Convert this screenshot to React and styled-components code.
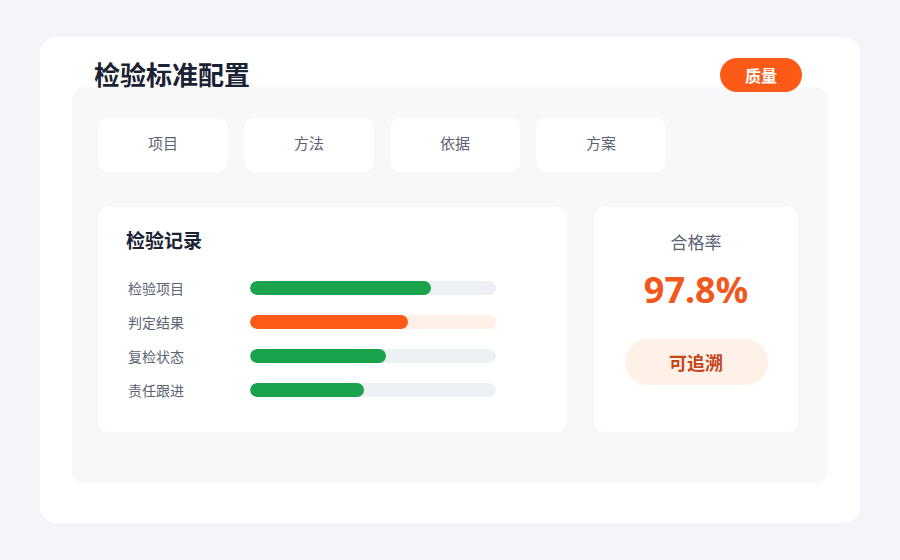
import React from 'react';
import styled, {createGlobalStyle} from "styled-components";

const GlobalStyle = createGlobalStyle`
  html, body {
    margin: 0;
    padding: 0;
    background: #f4f5f9;
    font-family: "Noto Sans", "Noto Sans CJK SC", sans-serif;
  }
`

const Page = styled.div`
  width: 900px;
  height: 560px;
  box-sizing: border-box;
  padding: 37px 40px;
`

const Card = styled.section`
  background: #fff;
  border-radius: 16px;
  padding: 21px 32px 40px;
  box-sizing: border-box;
  height: 486px;
`

const Header = styled.header`
  position: relative;
  z-index: 1;
  display: flex;
  align-items: center;
  justify-content: space-between;
  height: 34px;
  padding: 0 26px 0 22px;
  margin-bottom: -5px;
`

const Title = styled.h1`
  margin: 0;
  font-size: 26px;
  font-weight: 700;
  color: #1b2233;
  line-height: 34px;
`

const Badge = styled.span`
  display: inline-flex;
  align-items: center;
  justify-content: center;
  width: 82px;
  height: 34px;
  border-radius: 17px;
  background: #fd5a17;
  color: #fff;
  font-size: 16px;
  font-weight: 700;
`

const Panel = styled.div`
  background: #f7f8fa;
  border-radius: 12px;
  padding: 31px 30px 51px 26px;
  height: 396px;
  box-sizing: border-box;
`

const Tabs = styled.nav`
  display: flex;
  gap: 16px;
`

const Tab = styled.div`
  width: 130px;
  height: 54px;
  box-sizing: border-box;
  padding-bottom: 5px;
  border-radius: 10px;
  background: #fff;
  display: flex;
  align-items: center;
  justify-content: center;
  font-size: 15px;
  color: #5b6373;
`

const Row = styled.div`
  display: flex;
  gap: 27px;
  margin-top: 35px;
`

const Box = styled.div`
  background: #fff;
  border-radius: 12px;
  height: 225px;
  box-sizing: border-box;
`

const Records = styled(Box)`
  width: 469px;
  padding: 22px 28px;
`

const RecordsTitle = styled.h2`
  margin: 0 0 18px;
  font-size: 19px;
  font-weight: 700;
  color: #1b2233;
  line-height: 24px;
`

const Stat = styled.div`
  display: grid;
  grid-template-columns: 124px 246px;
  align-items: center;
  height: 34px;
`

const Label = styled.span`
  font-size: 14px;
  color: #5b6373;
  padding-left: 2px;
`

const Track = styled.div`
  height: 14px;
  border-radius: 7px;
  background: ${p => p.$warn ? '#fff0e8' : '#edf0f4'};
  overflow: hidden;
`

const Fill = styled.div`
  height: 100%;
  border-radius: 7px;
  background: ${p => p.$warn ? '#fd5a17' : '#1aa24c'};
`

const Rate = styled(Box)`
  width: 204px;
  display: flex;
  flex-direction: column;
  align-items: center;
  padding-top: 24px;
`

const RateLabel = styled.div`
  font-size: 17px;
  color: #5b6373;
  line-height: 24px;
`

const RateValue = styled.div`
  margin-top: 13px;
  font-size: 36px;
  font-weight: 700;
  color: #f0581e;
  line-height: 44px;
`

const TraceButton = styled.button`
  margin-top: 27px;
  width: 143px;
  height: 46px;
  border: none;
  border-radius: 23px;
  background: #fff0e8;
  color: #c4461a;
  font-family: inherit;
  font-size: 18px;
  font-weight: 700;
`

const tabs = ['项目', '方法', '依据', '方案'];

const stats = [
    {label: '检验项目', value: 73.6},
    {label: '判定结果', value: 64.2, warn: true},
    {label: '复检状态', value: 55.3},
    {label: '责任跟进', value: 46.3},
];

const App = () => {
    return (
        <Page>
            <GlobalStyle/>
            <Card>
                <Header>
                    <Title>检验标准配置</Title>
                    <Badge>质量</Badge>
                </Header>
                <Panel>
                    <Tabs>
                        {tabs.map(t => <Tab key={t}>{t}</Tab>)}
                    </Tabs>
                    <Row>
                        <Records>
                            <RecordsTitle>检验记录</RecordsTitle>
                            {stats.map(s => (
                                <Stat key={s.label}>
                                    <Label>{s.label}</Label>
                                    <Track $warn={s.warn}>
                                        <Fill $warn={s.warn} style={{width: `${s.value}%`}}/>
                                    </Track>
                                </Stat>
                            ))}
                        </Records>
                        <Rate>
                            <RateLabel>合格率</RateLabel>
                            <RateValue>97.8%</RateValue>
                            <TraceButton>可追溯</TraceButton>
                        </Rate>
                    </Row>
                </Panel>
            </Card>
        </Page>
    );
};

export default App;
